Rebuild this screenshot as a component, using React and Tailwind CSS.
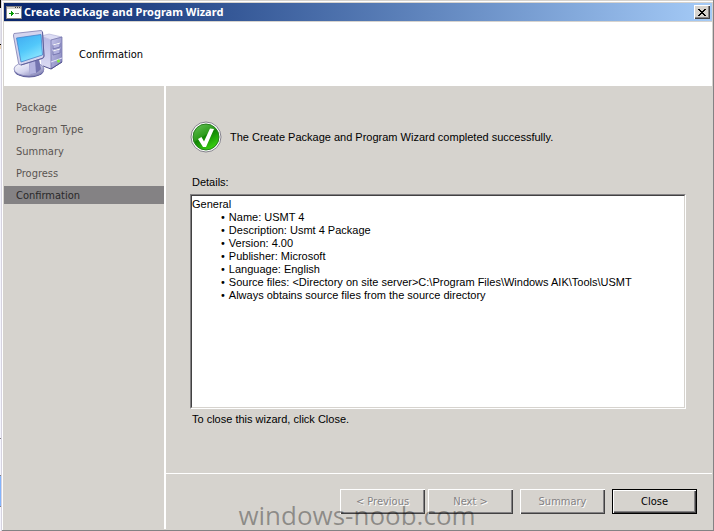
import React from "react";

const steps = ["Package", "Program Type", "Summary", "Progress", "Confirmation"];

const details = [
  "Name: USMT 4",
  "Description: Usmt 4 Package",
  "Version: 4.00",
  "Publisher: Microsoft",
  "Language: English",
  "Source files: <Directory on site server>C:\\Program Files\\Windows AIK\\Tools\\USMT",
  "Always obtains source files from the source directory",
];

const AppIcon = () => (
  <svg width="16" height="13" viewBox="0 0 16 13" shapeRendering="crispEdges">
    <rect width="16" height="13" fill="#848284" />
    <rect x="1" y="1" width="14" height="2" fill="#d6d3ce" />
    <rect x="9" y="1" width="1" height="1" fill="#424142" />
    <rect x="11" y="1" width="1" height="1" fill="#424142" />
    <rect x="13" y="1" width="1" height="1" fill="#424142" />
    <rect x="1" y="3" width="14" height="9" fill="#fff" />
    <path d="M3 7h2V5h1v1h1v1h1v1H7v1H6v1H5V8H3z" fill="#089a08" />
    <path d="M9 7h4v1H9z" fill="#848284" />
  </svg>
);

const ComputerIcon = () => (
  <svg width="50" height="50" viewBox="0 0 50 50">
    <defs>
      <linearGradient id="screen" x1="0.2" y1="0" x2="0.7" y2="1">
        <stop offset="0" stopColor="#42aef2" />
        <stop offset="0.5" stopColor="#52c8fa" />
        <stop offset="1" stopColor="#94eaff" />
      </linearGradient>
      <linearGradient id="tower" x1="0" y1="0" x2="1" y2="1">
        <stop offset="0" stopColor="#c4c4ea" />
        <stop offset="1" stopColor="#8484bc" />
      </linearGradient>
      <linearGradient id="side" x1="0" y1="0" x2="0" y2="1">
        <stop offset="0" stopColor="#b8b8e4" />
        <stop offset="1" stopColor="#dcdcf4" />
      </linearGradient>
      <linearGradient id="stand" x1="0" y1="0" x2="1" y2="1">
        <stop offset="0" stopColor="#ffffff" />
        <stop offset="0.5" stopColor="#d4d4ee" />
        <stop offset="1" stopColor="#6c6ca4" />
      </linearGradient>
    </defs>
    <path d="M28 7 36 5 49 8 38 11z" fill="#dcdcf4" stroke="#a0a0cc" strokeWidth="0.5" />
    <path d="M28 7 38 11v29l-10-4z" fill="url(#side)" />
    <path d="M38 11 49 8v25l-11 7z" fill="url(#tower)" stroke="#6c6ca4" strokeWidth="0.7" />
    <path d="M40 16l7-2v4l-7 2zM40 22l7-2v4l-7 2z" fill="#b4b4e0" stroke="#6464a0" strokeWidth="0.7" />
    <path d="M40 16l7-2M40 22l7-2" stroke="#fff" strokeWidth="1" />
    <path d="M38 33l11-4" stroke="#e4e4fa" strokeWidth="1" />
    <path d="M30 37l8 3 11-7" fill="none" stroke="#50508c" strokeWidth="1" />
    <circle cx="45.500" cy="32" r="1.500" fill="#84f03c" />
    <ellipse cx="16" cy="41" rx="15" ry="7.500" fill="#60609c" />
    <ellipse cx="16" cy="40" rx="15" ry="7" fill="url(#stand)" stroke="#8c8cbc" strokeWidth="0.8" />
    <path d="M16 33l10-3 2 10q-5 6-11 5z" fill="#7474b0" />
    <path d="M16 33l6-2 1 13q-3 1-6 1z" fill="#b4b4e0" />
    <path d="M1 4.500 28 1.500q1.500 0 1.500 2L31 27q0 2-2 2.500L8 36q-2 0-2.500-2L.5 7q0-2 .5-2.500z" fill="#d4d4ee" stroke="#7c7cb0" strokeWidth="0.8" />
    <path d="M29.500 3 31 27q0 2-2 2.500L8 36" fill="none" stroke="#60609c" strokeWidth="1" />
    <path d="M3.500 9 28 5.500 29.500 26 8 33z" fill="url(#screen)" stroke="#4484cc" strokeWidth="0.8" />
  </svg>
);

const SuccessIcon = () => (
  <svg width="32" height="32" viewBox="0 0 32 32">
    <defs>
      <linearGradient id="ball" x1="0" y1="0" x2="0.6" y2="1">
        <stop offset="0" stopColor="#6cc45c" />
        <stop offset="0.5" stopColor="#2c9c1c" />
        <stop offset="0.55" stopColor="#108404" />
        <stop offset="1" stopColor="#38d010" />
      </linearGradient>
    </defs>
    <circle cx="16" cy="16" r="15" fill="#fff" stroke="#84828c" strokeWidth="1" />
    <circle cx="16" cy="16" r="13" fill="url(#ball)" stroke="#287c20" strokeWidth="1" />
    <path d="M8 18 11.500 16 14 20.500 20 7.500 24 8 16 26H13z" fill="#fff" />
  </svg>
);

const WizardButton = ({ children, disabled, isDefault }) => (
  <button
    type="button"
    disabled={disabled}
    className={
      isDefault
        ? "h-[25px] w-[85px] border border-black bg-[#d6d3ce] text-black shadow-[inset_1px_1px_0_#fff,inset_-1px_-1px_0_#424142,inset_-2px_-2px_0_#848284]"
        : "h-[25px] w-[85px] bg-[#d6d3ce] text-[#848284] shadow-[inset_1px_1px_0_#fff,inset_-1px_-1px_0_#424142,inset_-2px_-2px_0_#848284] [text-shadow:1px_1px_0_#fff]"
    }
  >
    {children}
  </button>
);

// sliver of the desktop that shows left of the window
const Desktop = () => (
  <div className="flex w-px shrink-0 flex-col bg-[#f4f4fc]">
    <div className="h-2 bg-black" />
    <div className="h-9 bg-[#e4e4ec]" />
    <div className="h-px bg-black" />
    <div className="h-1 bg-[#e8d0b0]" />
    <div className="flex-1" />
    <div className="h-px bg-[#848284]" />
    <div className="h-9" />
    <div className="h-8 border-y border-[#848284] bg-[#84b4fc]" />
    <div className="h-6" />
  </div>
);

const App = () => {
  return (
    <div className="relative flex min-h-screen bg-[#d6d3e0] font-['DejaVu_Sans_Condensed','DejaVu_Sans',sans-serif] text-[11px] leading-[18px] text-black">
      <Desktop />
      <div className="ml-px flex flex-1 flex-col border-r border-b border-[#848284] bg-[#d6d3ce] pt-px">
        <div className="flex flex-1 flex-col border-t border-l border-white p-px">
          <header className="flex h-[18px] items-center bg-linear-to-r from-[#08246b] to-[#a5cbf7] px-0.5">
            <AppIcon />
            <h1 className="ml-0.5 flex-1 font-['Noto_Sans',sans-serif] text-[11px] font-bold text-white">
              Create Package and Program Wizard
            </h1>
            <button
              type="button"
              aria-label="Close window"
              className="flex h-3.5 w-4 items-center justify-center bg-[#d6d3ce] shadow-[inset_1px_1px_0_#fff,inset_-1px_-1px_0_#424142,inset_-2px_-2px_0_#848284]"
            >
              <svg width="8" height="7" viewBox="0 0 8 7" shapeRendering="crispEdges">
                <path
                  d="M0 0h2v1h1v1h2V1h1V0h2v1H7v1H6v1H5v1h1v1h1v1h1v1H6V6H5V5H3v1H2v1H0V6h1V5h1V4h1V3H2V2H1V1H0z"
                  fill="#000"
                />
              </svg>
            </button>
          </header>

          <div className="mt-px flex h-16 items-center bg-white pl-[9px]">
            <ComputerIcon />
            <h2 className="ml-4 pt-0.5 leading-4">Confirmation</h2>
          </div>

          <div className="flex flex-1">
            <nav className="w-[160px] shrink-0 pt-3">
              <ul className="flex flex-col gap-1">
                {steps.map((step) => (
                  <li
                    key={step}
                    className={
                      step === "Confirmation"
                        ? "bg-[#848284] pt-0.5 pl-3 leading-4 text-[#292829]"
                        : "pt-0.5 pl-3 leading-4 text-[#5a5552]"
                    }
                  >
                    {step}
                  </li>
                ))}
              </ul>
            </nav>

            <div className="flex flex-1 flex-col border-l-2 border-white">
              <main className="flex flex-1 flex-col pt-[35px] pr-[26px] pb-[45px] pl-6 font-['Liberation_Sans',Arial,sans-serif]">
                <div className="flex items-center gap-2">
                  <SuccessIcon />
                  <p>The Create Package and Program Wizard completed successfully.</p>
                </div>
                <h3 id="details-label" className="mt-5 pl-0.5">
                  Details:
                </h3>
                <section
                  aria-labelledby="details-label"
                  className="mt-[3px] flex flex-1 flex-col border border-t-[#848284] border-r-white border-b-white border-l-[#848284] bg-white"
                >
                  <div className="flex-1 border border-t-[#424142] border-r-[#d6d3ce] border-b-[#d6d3ce] border-l-[#424142] pt-0.5 leading-[13px]">
                    <p>General</p>
                    <ul className="pl-7">
                      {details.map((line) => (
                        <li key={line} className="flex gap-[3px]">
                          <span className="font-['DejaVu_Sans_Condensed',sans-serif]">•</span>
                          {line}
                        </li>
                      ))}
                    </ul>
                  </div>
                </section>
                <p className="mt-px pl-0.5">To close this wizard, click Close.</p>
              </main>

              <footer className="flex justify-end border-t border-white pt-[15px] pr-[15px] pb-[15px]">
                <div className="flex gap-[3px]">
                  <WizardButton disabled>&lt; Previous</WizardButton>
                  <WizardButton disabled>Next &gt;</WizardButton>
                </div>
                <div className="ml-[7px] flex gap-[7px]">
                  <WizardButton disabled>Summary</WizardButton>
                  <WizardButton isDefault>Close</WizardButton>
                </div>
              </footer>
            </div>
          </div>
        </div>
      </div>

      <p className="pointer-events-none absolute inset-x-0 bottom-0 text-center font-['Open_Sans',sans-serif] text-[26px] leading-8 text-black/35">
        windows-noob.com
      </p>
    </div>
  );
};

export default App;
